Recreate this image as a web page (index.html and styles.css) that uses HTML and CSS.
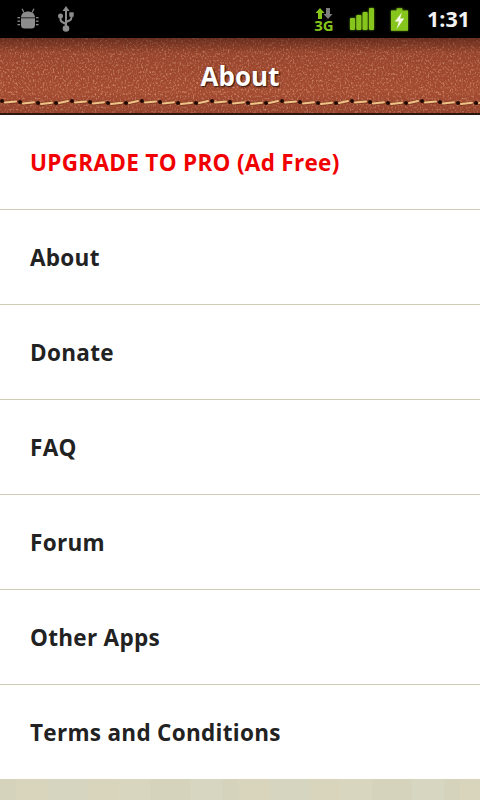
FILE: index.html
```html
<!DOCTYPE html>
<html lang="en">
<head>
<meta charset="utf-8">
<title>About</title>
<link rel="stylesheet" href="styles.css">
</head>
<body>
<div class="screen">
  <div class="status">
    <div class="status-left">
      <svg class="ic-bug" viewBox="0 0 22 22" aria-hidden="true">
        <g fill="#8c8c8c">
          <path d="M4 9.500 C4 5.500 7.500 3.500 11 3.500 C14.500 3.500 18 5.500 18 9.500 Z"/>
          <path d="M4 10.300 H18 V17 Q18 20.500 14.500 20.500 H7.500 Q4 20.500 4 17 Z"/>
          <rect x="0.500" y="9" width="2.600" height="1.300"/><rect x="0.500" y="12.500" width="2.600" height="1.300"/><rect x="0.500" y="16" width="2.600" height="1.300"/>
          <rect x="18.900" y="9" width="2.600" height="1.300"/><rect x="18.900" y="12.500" width="2.600" height="1.300"/><rect x="18.900" y="16" width="2.600" height="1.300"/>
        </g>
        <path d="M7 4.500 L5 0.800 M15 4.500 L17 0.800" stroke="#8c8c8c" stroke-width="1.200" fill="none"/>
      </svg>
      <svg class="ic-usb" viewBox="0 0 18 26" aria-hidden="true">
        <g fill="none" stroke="#8c8c8c" stroke-width="2">
          <path d="M9 3 V21"/>
          <path d="M3.500 10 V13 Q3.500 15.500 6 16.500 L9 18"/>
          <path d="M14.500 9 V11.500 Q14.500 13.500 12.500 14.500 L9 16"/>
        </g>
        <g fill="#8c8c8c">
          <path d="M9 0 L12.500 5 H5.500 Z"/>
          <circle cx="3.500" cy="10" r="2.500"/>
          <rect x="12.300" y="6.300" width="4.400" height="4.400"/>
          <circle cx="9" cy="22.500" r="3.300"/>
        </g>
      </svg>
    </div>
    <div class="status-right">
      <div class="net">
        <svg class="ic-arrows" viewBox="0 0 18 11" aria-hidden="true">
          <path d="M5 0 L9.500 5 H7 V11 H3 V5 H0.500 Z" fill="#86c51c"/>
          <path d="M13 11 L8.500 6 H11 V0 H15 V6 H17.500 Z" fill="#7d7d7d"/>
        </svg>
        <span class="net-label">3G</span>
      </div>
      <svg class="ic-signal" viewBox="0 0 24 22" aria-hidden="true">
        <g fill="#86c51c">
          <rect x="0" y="10" width="5" height="12" rx="1"/>
          <rect x="6.300" y="7" width="5" height="15" rx="1"/>
          <rect x="12.600" y="4" width="5" height="18" rx="1"/>
          <rect x="19" y="0" width="5" height="22" rx="1"/>
        </g>
      </svg>
      <svg class="ic-battery" viewBox="0 0 18 24" aria-hidden="true">
        <path d="M6 0 H12 V2.500 H18 V24 H0 V2.500 H6 Z" fill="#86c51c"/>
        <path d="M11.500 4.500 L4 14 H8.300 L6 22 L14 11 H9.700 Z" fill="#f6f9e8"/>
      </svg>
      <span class="clock">1:31</span>
    </div>
  </div>

  <header class="titlebar">
    <svg class="leather" viewBox="0 0 480 77" preserveAspectRatio="none" aria-hidden="true">
      <defs>
        <filter id="grain" x="0" y="0" width="100%" height="100%">
          <feTurbulence type="fractalNoise" baseFrequency="0.42 0.62" numOctaves="3" seed="7"/>
          <feColorMatrix type="matrix" values="0 0 0 0 0.36  0 0 0 0 0.07  0 0 0 0 0.03  3.200 0 0 0 -1.250"/>
        </filter>
        <filter id="glow" x="0" y="0" width="100%" height="100%">
          <feTurbulence type="fractalNoise" baseFrequency="0.6 0.45" numOctaves="2" seed="21"/>
          <feColorMatrix type="matrix" values="0 0 0 0 0.78  0 0 0 0 0.38  0 0 0 0 0.24  0 2 0 0 -1"/>
        </filter>
        <linearGradient id="shade" x1="0" y1="0" x2="0" y2="1">
          <stop offset="0" stop-color="#2a0c05" stop-opacity=".5"/>
          <stop offset=".2" stop-color="#2a0c05" stop-opacity=".1"/>
          <stop offset=".7" stop-color="#2a0c05" stop-opacity="0"/>
          <stop offset="1" stop-color="#2a0c05" stop-opacity=".15"/>
        </linearGradient>
        <pattern id="stitch" width="70" height="10" patternUnits="userSpaceOnUse" y="59">
          <g stroke="#6a2c18" stroke-width="3.600" stroke-linecap="round" fill="none" opacity=".55">
            <path d="M5 5.800 L16 4.800"/>
            <path d="M23 6.800 L34 5.500"/>
            <path d="M41 7.300 L52 6"/>
            <path d="M59 6.300 L68 4.300"/>
          </g>
          <g stroke="#efc285" stroke-width="2" stroke-linecap="round" fill="none">
            <path d="M5 5.500 L16 4.500"/>
            <path d="M23 6.500 L34 5.200"/>
            <path d="M41 7 L52 5.700"/>
            <path d="M59 6 L68 4"/>
          </g>
          <g fill="#1d0a05">
            <circle cx="2" cy="4" r="2"/>
            <circle cx="20" cy="5" r="2"/>
            <circle cx="38" cy="6" r="2"/>
            <circle cx="56" cy="6" r="2"/>
          </g>
        </pattern>
      </defs>
      <rect width="480" height="77" fill="#a64c32"/>
      <rect width="480" height="77" filter="url(#grain)"/>
      <rect width="480" height="77" filter="url(#glow)"/>
      <rect width="480" height="77" fill="url(#shade)"/>
      <rect y="59" width="480" height="10" fill="url(#stitch)"/>
      <rect y="75" width="480" height="2" fill="#2b1710"/>
    </svg>
    <h1 class="title">About</h1>
  </header>

  <ul class="menu">
    <li class="item item-pro">UPGRADE TO PRO (Ad Free)</li>
    <li class="item">About</li>
    <li class="item">Donate</li>
    <li class="item">FAQ</li>
    <li class="item">Forum</li>
    <li class="item">Other Apps</li>
    <li class="item">Terms and Conditions</li>
  </ul>
  <div class="floor"></div>
</div>
</body>
</html>
```
FILE: styles.css
```css
* { box-sizing: border-box; }
html, body { margin: 0; padding: 0; }
body { background: #fff; font-family: "Open Sans", "Noto Sans", sans-serif; }
.screen { width: 480px; height: 800px; display: flex; flex-direction: column; overflow: hidden; }

.status { height: 38px; flex: none; background: #000; display: flex; justify-content: space-between; align-items: center; padding: 0 10px 0 17px; }
.status-left, .status-right { display: flex; align-items: center; }
.ic-bug { width: 22px; height: 22px; display: block; }
.ic-usb { width: 18px; height: 26px; margin-left: 18px; display: block; }
.net { width: 18px; display: flex; flex-direction: column; align-items: center; }
.ic-arrows { width: 18px; height: 11px; display: block; }
.net-label { font-size: 15px; line-height: 12px; font-weight: 700; color: #86c51c; }
.ic-signal { width: 24px; height: 22px; margin-left: 17px; display: block; filter: drop-shadow(0 0 1px #5f8f10); }
.ic-battery { width: 17px; height: 23px; margin-left: 17px; display: block; filter: drop-shadow(0 0 1px #5f8f10); }
.clock { margin-left: 19px; color: #f2f2f2; font-size: 21.500px; font-weight: 700; line-height: 26px; }

.titlebar { position: relative; height: 77px; flex: none; display: flex; align-items: center; justify-content: center; padding-bottom: 1px; }
.leather { position: absolute; inset: 0; width: 100%; height: 100%; display: block; }
.title { position: relative; margin: 0; color: #fff; font-size: 26px; line-height: 34px; font-weight: 700; text-shadow: 1px 1px 2px #1c0a04; }

.menu { list-style: none; margin: 0; padding: 0; flex: none; background: #fff; }
.item { height: 95px; padding-left: 30px; display: flex; align-items: center; font-size: 22.500px; font-weight: 700; color: #222; letter-spacing: .3px; border-bottom: 1px solid #cfcdb5; }
.item:last-child { height: 94px; border-bottom: 0; }
.item-pro { color: #f00000; }

.floor { flex: 1; background-color: #d8d6bf; background-image: linear-gradient(90deg, #d5d3bb 0 16px, #d8d5bc 16px 48px, #d6d6c0 48px 88px, #d8d5bc 88px 118px, #d8d6bf 118px 150px, #d5d3bb 150px 190px, #d7d6c1 190px 222px); background-size: 222px 100%; }
```
